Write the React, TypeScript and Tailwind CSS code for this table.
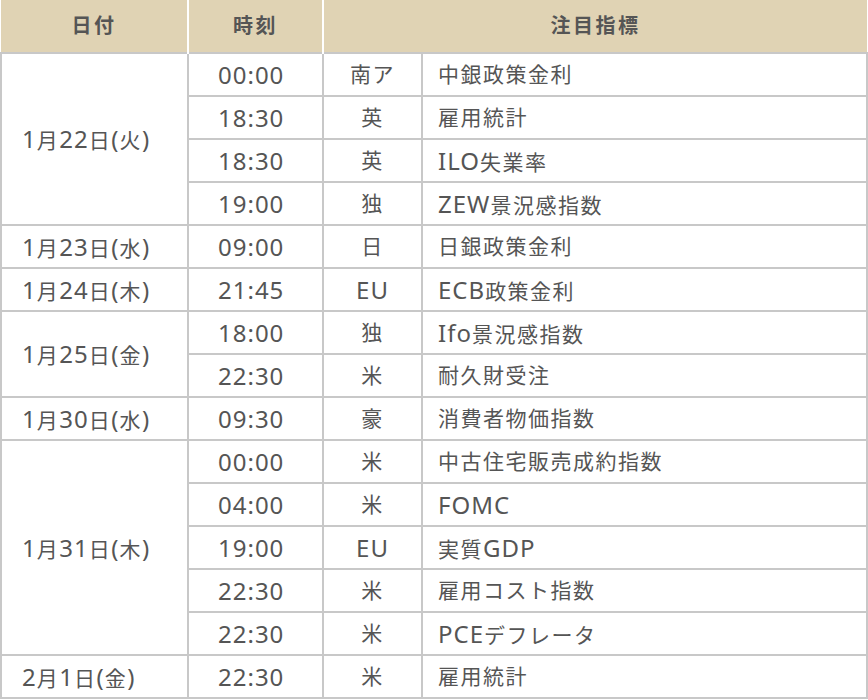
type Row = { time: string; country: string; name: string };
type Group = { date: string; rows: Row[] };

const groups: Group[] = [
  {
    date: "1月22日(火)",
    rows: [
      { time: "00:00", country: "南ア", name: "中銀政策金利" },
      { time: "18:30", country: "英", name: "雇用統計" },
      { time: "18:30", country: "英", name: "ILO失業率" },
      { time: "19:00", country: "独", name: "ZEW景況感指数" },
    ],
  },
  { date: "1月23日(水)", rows: [{ time: "09:00", country: "日", name: "日銀政策金利" }] },
  { date: "1月24日(木)", rows: [{ time: "21:45", country: "EU", name: "ECB政策金利" }] },
  {
    date: "1月25日(金)",
    rows: [
      { time: "18:00", country: "独", name: "Ifo景況感指数" },
      { time: "22:30", country: "米", name: "耐久財受注" },
    ],
  },
  { date: "1月30日(水)", rows: [{ time: "09:30", country: "豪", name: "消費者物価指数" }] },
  {
    date: "1月31日(木)",
    rows: [
      { time: "00:00", country: "米", name: "中古住宅販売成約指数" },
      { time: "04:00", country: "米", name: "FOMC" },
      { time: "19:00", country: "EU", name: "実質GDP" },
      { time: "22:30", country: "米", name: "雇用コスト指数" },
      { time: "22:30", country: "米", name: "PCEデフレータ" },
    ],
  },
  { date: "2月1日(金)", rows: [{ time: "22:30", country: "米", name: "雇用統計" }] },
];

// latin runs are set larger than the kana/kanji, like the original font does
function Mixed({ text }: { text: string }) {
  const parts = text.split(/([\x20-\x7e]+)/).filter(Boolean);
  return (
    <>
      {parts.map((p, i) =>
        /^[\x20-\x7e]+$/.test(p) ? (
          <span key={i} className="text-[24px] leading-none tracking-[1px]">
            {p}
          </span>
        ) : (
          <span key={i}>{p}</span>
        )
      )}
    </>
  );
}

// 2px grey grid, 43px rows
const cell = "border-2 border-[#c8c8c8] h-[43px] p-0 align-middle leading-none";

export default function App() {
  return (
    <div
      className="w-[868px] bg-white text-[#555]"
      style={{ fontFamily: '"Noto Sans", "Noto Sans CJK JP", sans-serif' }}
    >
      <table className="w-[868px] table-fixed border-collapse">
        <colgroup>
          <col className="w-[187px]" />
          <col className="w-[135px]" />
          <col className="w-[99px]" />
          <col />
        </colgroup>
        <thead>
          <tr className="bg-[#e0d3b4] h-[53px] text-[20px] tracking-[2.5px]">
            <th className="border-r-2 border-white font-bold">日付</th>
            <th className="border-x-2 border-white font-bold">時刻</th>
            <th colSpan={2} className="border-l-2 border-white font-bold">
              注目指標
            </th>
          </tr>
        </thead>
        <tbody className="text-[21px] tracking-[1.5px]">
          {groups.map((g) =>
            g.rows.map((r, i) => (
              <tr key={g.date + i}>
                {i === 0 && (
                  <td rowSpan={g.rows.length} className={`${cell} pl-5 text-left`}>
                    <Mixed text={g.date} />
                  </td>
                )}
                <td className={`${cell} pl-[29px] text-left`}>
                  <Mixed text={r.time} />
                </td>
                <td className={`${cell} text-center`}>
                  <Mixed text={r.country} />
                </td>
                <td className={`${cell} pl-[15px] text-left`}>
                  <Mixed text={r.name} />
                </td>
              </tr>
            ))
          )}
        </tbody>
      </table>
    </div>
  );
}
